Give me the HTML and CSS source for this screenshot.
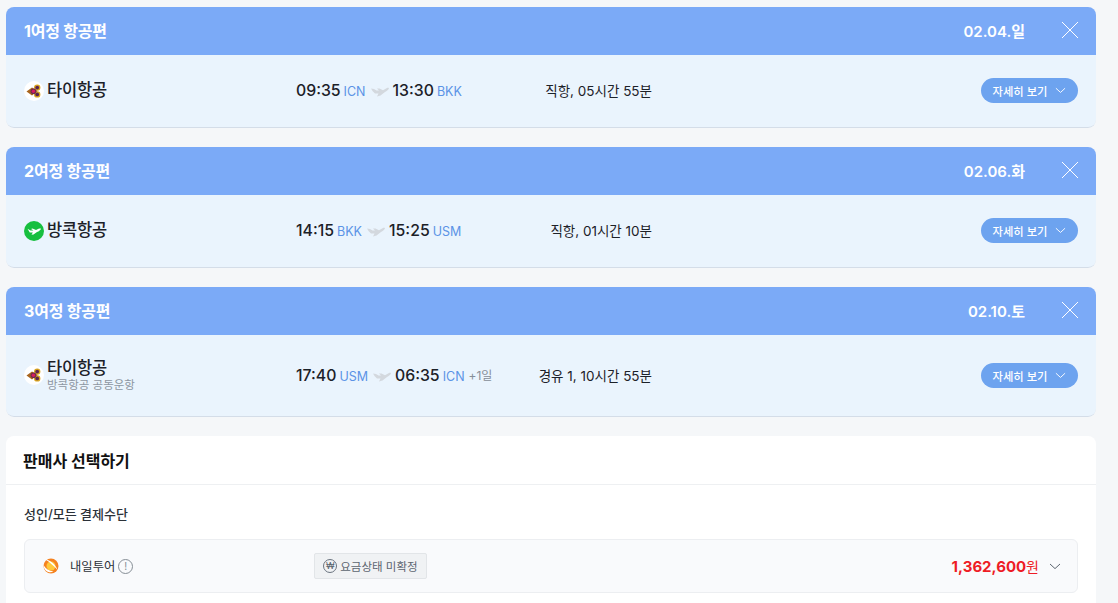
FILE: index.html
```html
<!DOCTYPE html>
<html lang="ko">
<head>
<meta charset="utf-8">
<title>항공편</title>
<link rel="stylesheet" href="styles.css">
</head>
<body>
<svg width="0" height="0" class="defs">
  <defs>
    <symbol id="thai" viewBox="0 0 20 20">
      <circle cx="10" cy="10" r="10" fill="#fff"/>
      <circle cx="13.200" cy="6.600" r="3.200" fill="#d9a520"/><circle cx="13.200" cy="6.600" r="1.900" fill="#5a2450"/>
      <circle cx="13.200" cy="13.400" r="3.200" fill="#d9a520"/><circle cx="13.200" cy="13.400" r="1.900" fill="#5a2450"/>
      <path d="M2.500 10.500 8 6.500l5.500 3.500L8 14.500z" fill="#a8651e"/>
      <circle cx="9.400" cy="10.200" r="2.800" fill="#6a2a50"/>
      <circle cx="9.400" cy="10.200" r="1.700" fill="#d81b60"/>
    </symbol>
    <symbol id="plane" viewBox="0 0 18 11">
      <path d="M0 2.500 3 3 5.500 4.600 8 4.400 6 2.600 8.500 2.600 12 4.200 15.500 2.200C16.800 1.600 17.800 1.700 18 2.200 17.700 3.500 15.800 5 14 6L9.500 9.500 6 10.500 7.500 7.600 4 7.600 1.500 5Z" fill="#d3d8de"/>
    </symbol>
    <symbol id="chev" viewBox="0 0 12 7">
      <path d="M1 1l5 4.600L11 1" fill="none" stroke="currentColor" stroke-width="1"/>
    </symbol>
    <symbol id="close" viewBox="0 0 18 18">
      <path d="M1 1l16 16M17 1 1 17" fill="none" stroke="#fff" stroke-width="1"/>
    </symbol>
  </defs>
</svg>
<main class="page">
  <section class="leg">
    <header class="leg-head">
      <h2 class="leg-title">1여정 항공편</h2>
      <span class="leg-date">02.04.일</span>
      <svg class="leg-close"><use href="#close"/></svg>
    </header>
    <div class="leg-body">
      <div class="airline">
        <svg class="logo"><use href="#thai"/></svg>
        <div class="airline-name">타이항공</div>
      </div>
      <div class="times">
        <span class="time">09:35</span><span class="code">ICN</span>
        <svg class="plane"><use href="#plane"/></svg>
        <span class="time">13:30</span><span class="code">BKK</span>
      </div>
      <div class="duration">직항, 05시간 55분</div>
      <button class="detail">자세히 보기<svg class="detail-chev"><use href="#chev"/></svg></button>
    </div>
  </section>

  <section class="leg">
    <header class="leg-head">
      <h2 class="leg-title">2여정 항공편</h2>
      <span class="leg-date">02.06.화</span>
      <svg class="leg-close"><use href="#close"/></svg>
    </header>
    <div class="leg-body">
      <div class="airline">
        <svg class="logo" viewBox="0 0 20 20">
          <circle cx="10" cy="10" r="10" fill="#17bf3f"/>
          <path d="M3.500 7.800 6.500 9.500 9.500 9.500 7 8 8.500 7.500 12 9 14.500 7.800C15.800 7.200 16.800 7.300 17 7.700 16.600 9 15 10.200 13 11L9.500 13.500 7.500 13.800 8.800 11.400 5.800 11.400Z" fill="#fff"/>
        </svg>
        <div class="airline-name">방콕항공</div>
      </div>
      <div class="times">
        <span class="time">14:15</span><span class="code">BKK</span>
        <svg class="plane"><use href="#plane"/></svg>
        <span class="time">15:25</span><span class="code">USM</span>
      </div>
      <div class="duration">직항, 01시간 10분</div>
      <button class="detail">자세히 보기<svg class="detail-chev"><use href="#chev"/></svg></button>
    </div>
  </section>

  <section class="leg">
    <header class="leg-head">
      <h2 class="leg-title">3여정 항공편</h2>
      <span class="leg-date">02.10.토</span>
      <svg class="leg-close"><use href="#close"/></svg>
    </header>
    <div class="leg-body leg-body-tall">
      <div class="airline airline-stacked">
        <svg class="logo"><use href="#thai"/></svg>
        <div>
          <div class="airline-name">타이항공</div>
          <div class="codeshare">방콕항공 공동운항</div>
        </div>
      </div>
      <div class="times">
        <span class="time">17:40</span><span class="code">USM</span>
        <svg class="plane"><use href="#plane"/></svg>
        <span class="time">06:35</span><span class="code">ICN</span><span class="plus">+1일</span>
      </div>
      <div class="duration">경유 1, 10시간 55분</div>
      <button class="detail">자세히 보기<svg class="detail-chev"><use href="#chev"/></svg></button>
    </div>
  </section>

  <section class="sellers">
    <h2 class="sellers-title">판매사 선택하기</h2>
    <div class="sellers-body">
      <h3 class="sellers-sub">성인/모든 결제수단</h3>
      <div class="seller">
        <svg class="seller-logo" viewBox="0 0 16 16">
          <circle cx="8" cy="8" r="7.500" fill="#f58220"/>
          <circle cx="8" cy="8" r="4.500" fill="#ffc93c"/>
          <path d="M2.500 1.500C7 2 12.500 6 14.500 12 11 8 7 4.500 2.500 1.500Z" fill="#fff"/>
          <path d="M.5 7C2.500 10.500 6 13 10.500 13.500 6 16 .5 12.500 .5 7Z" fill="#fff"/>
        </svg>
        <span class="seller-name">내일투어</span>
        <span class="info">!</span>
        <span class="fare-tag"><span class="won">₩</span>요금상태 미확정</span>
        <span class="price"><b>1,362,600</b>원</span>
        <svg class="seller-chev"><use href="#chev"/></svg>
      </div>
    </div>
  </section>
</main>
</body>
</html>
```
FILE: styles.css
```css
* { box-sizing: border-box; }
html, body { height: 603px; overflow: hidden; }
body {
  margin: 0;
  background: #f5f7f9;
  font-family: Inter, "Noto Sans CJK KR", sans-serif;
  color: #1c2128;
}
.defs { position: absolute; }
.page {
  width: 1090px;
  margin-left: 6px;
  padding-top: 7px;
  display: flex;
  flex-direction: column;
  gap: 19px;
}
.leg {
  border-radius: 8px;
  overflow: hidden;
}
.leg-head {
  height: 48px;
  background: #7baaf7;
  color: #fff;
  display: flex;
  align-items: center;
  padding: 0 17px 2px 18px;
}
.leg-title {
  margin: 0;
  font-size: 16px;
  font-weight: 700;
  letter-spacing: -0.2px;
}
.leg-date {
  margin-left: auto;
  font-size: 15px;
  font-weight: 600;
}
.leg-close {
  width: 18px;
  height: 18px;
  margin-left: 36px;
}
.leg-body {
  height: 73px;
  background: #eaf4fd;
  border-bottom: 1px solid #d4dde8;
  border-radius: 0 0 8px 8px;
  display: flex;
  align-items: center;
  padding: 0 18px 1px;
}
.leg-body-tall { height: 82px; padding-bottom: 0; }
.airline {
  width: 272px;
  display: flex;
  align-items: center;
  gap: 3px;
}
.airline-stacked { padding-bottom: 1px; }
.logo {
  width: 20px;
  height: 20px;
  flex: none;
}
.airline-name {
  font-size: 16.500px;
  line-height: 21px;
  font-weight: 500;
  letter-spacing: -0.2px;
}
.codeshare {
  font-size: 11.500px;
  line-height: 13px;
  color: #8d96a1;
}
.times {
  width: 230px;
  display: flex;
  align-items: center;
  white-space: nowrap;
}
.time {
  font-size: 15.800px;
  font-weight: 500;
}
.code {
  margin-left: 3px;
  font-size: 12.500px;
  color: #5b93e6;
  padding-top: 2px;
}
.plus {
  margin-left: 4px;
  font-size: 12px;
  color: #868e98;
  padding-bottom: 2px;
}
.plane {
  width: 18px;
  height: 11px;
  margin: 2px 4px 0 5px;
}
.duration {
  width: 126px;
  text-align: right;
  font-size: 13.500px;
  padding-bottom: 2px;
}
.detail {
  margin-left: auto;
  width: 97px;
  height: 25px;
  border: 0;
  border-radius: 13px;
  background: #6da3ef;
  color: #fff;
  font: 500 11.300px Inter, "Noto Sans CJK KR", sans-serif;
  display: flex;
  align-items: center;
  justify-content: center;
  padding: 0;
}
.detail-chev {
  width: 11px;
  height: 7px;
  margin-left: 8px;
}
.sellers {
  background: #fff;
  border-radius: 8px 8px 0 0;
  height: 170px;
}
.sellers-title {
  margin: 0;
  height: 49px;
  border-bottom: 1px solid #eef0f2;
  padding: 0 17px;
  display: flex;
  align-items: center;
  font-size: 16px;
  font-weight: 700;
  color: #111;
}
.sellers-body {
  padding: 19px 18px 0;
}
.sellers-sub {
  margin: 0 0 15px;
  font-size: 13px;
  line-height: 20px;
  font-weight: 500;
  color: #2b3138;
}
.seller {
  height: 54px;
  background: #f9fafc;
  border: 1px solid #eceef1;
  border-radius: 6px;
  display: flex;
  align-items: center;
  padding: 0 16px 0 18px;
}
.seller-logo {
  width: 16px;
  height: 16px;
  flex: none;
}
.seller-name {
  margin-left: 11px;
  font-size: 12.300px;
  color: #2b3138;
}
.info {
  width: 15px;
  height: 15px;
  margin-left: 3px;
  border: 1px solid #868e96;
  border-radius: 50%;
  font-size: 10px;
  line-height: 13px;
  text-align: center;
  color: #868e96;
}
.fare-tag {
  margin-left: 181px;
  height: 26px;
  padding: 0 8px;
  background: #f0f2f4;
  border: 1px solid #e2e5e8;
  border-radius: 2px;
  display: flex;
  align-items: center;
  gap: 3px;
  font-size: 11.500px;
  color: #5c6570;
}
.won {
  width: 14px;
  height: 14px;
  border: 1px solid #6b7480;
  border-radius: 50%;
  font-size: 9px;
  line-height: 12px;
  text-align: center;
}
.price {
  margin-left: auto;
  color: #ee1c25;
  font-size: 14px;
}
.price b {
  font-size: 15px;
  font-weight: 700;
}
.seller-chev {
  width: 12px;
  height: 7px;
  margin-left: 10px;
  color: #5c6570;
}
```
